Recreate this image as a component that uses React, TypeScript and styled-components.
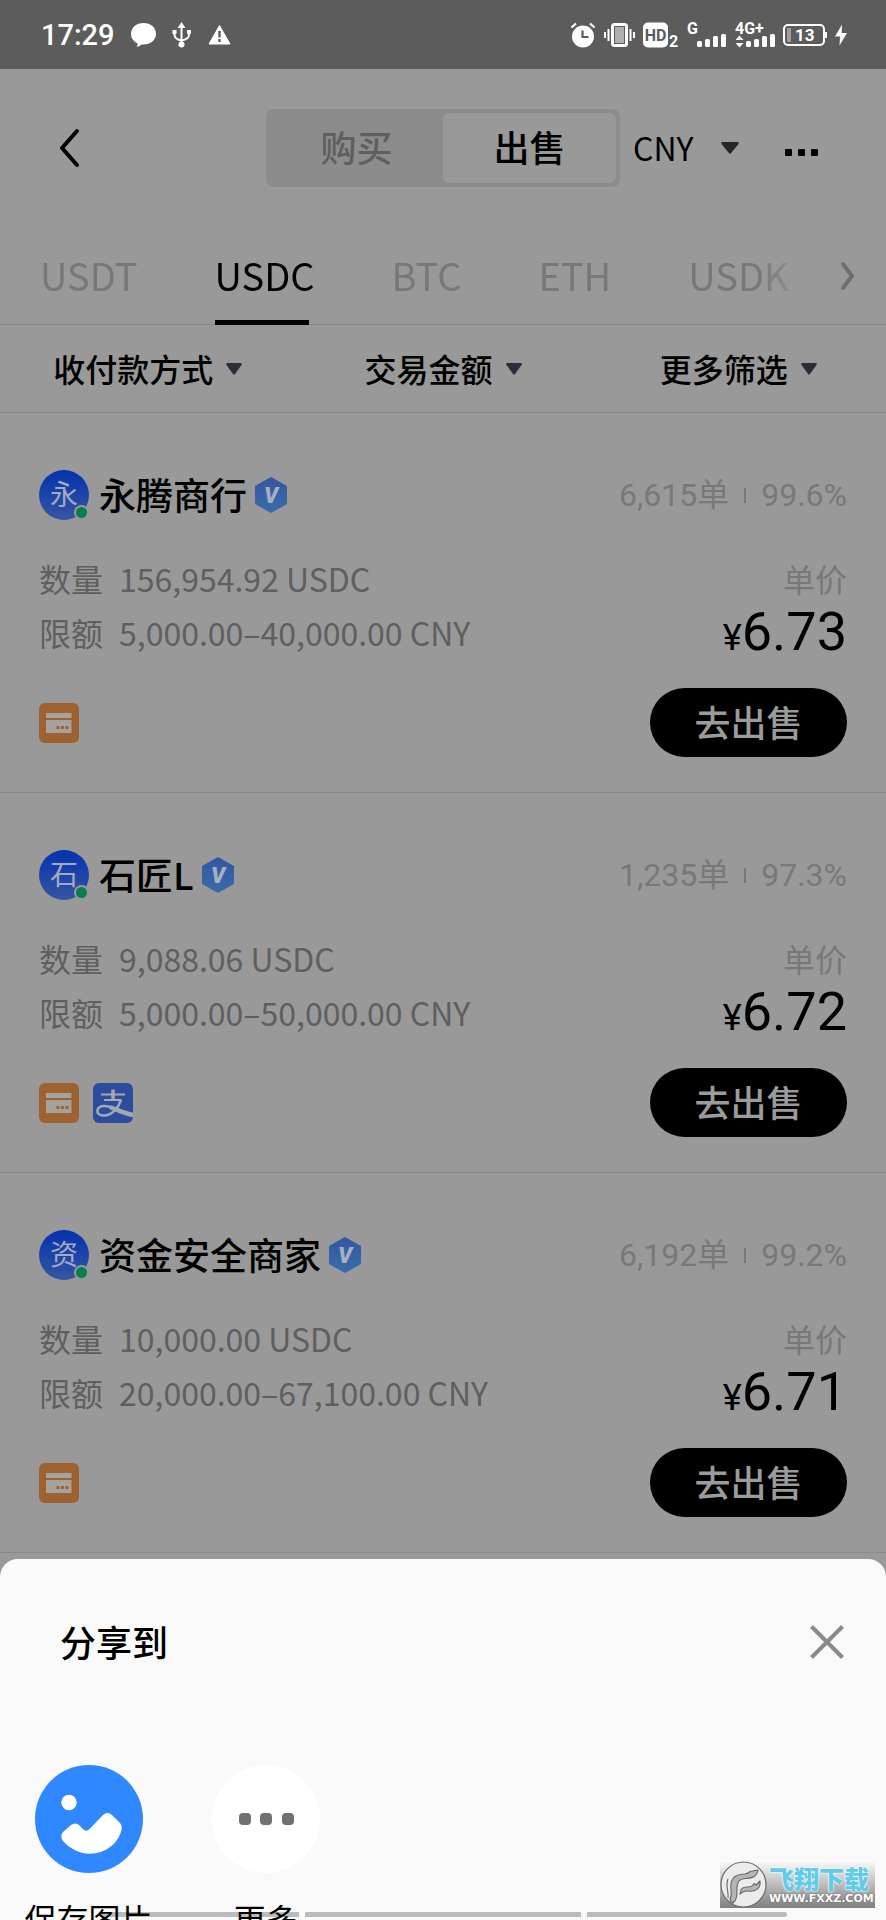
import React, { useState } from "react";
import styled, { createGlobalStyle } from "styled-components";

/* Colours of the page as it looks under the dimming of the open share sheet. */
const color = {
  status: "#5c5c5c",
  page: "#999999",
  line: "#8b8b8b",
  field: "#8c8c8c",
  ink: "#000000",
  soft: "#5f5f5f",
  faint: "#787878",
  caret: "#2b2e3a",
  sheet: "#fafafa",
};

const GlobalStyle = createGlobalStyle`
  * { box-sizing: border-box; }
  body {
    margin: 0;
    background: ${color.page};
    color: ${color.ink};
    font-family: "Noto Sans CJK SC", "Noto Sans", sans-serif;
    font-size: 32px;
  }
  button, select {
    margin: 0;
    padding: 0;
    border: 0;
    background: none;
    color: inherit;
    font: inherit;
    cursor: pointer;
  }
  svg { display: block; flex: none; overflow: visible; }
`;

const Screen = styled.div`
  height: 100vh;
  overflow: hidden;
`;

/* ---------- status bar ---------- */

const StatusBar = styled.div`
  display: flex;
  align-items: center;
  justify-content: space-between;
  height: 69px;
  padding: 0 39px 0 41px;
  background: ${color.status};
  color: #fff;
`;

const StatusGroup = styled.div<{ $gap: number }>`
  display: flex;
  align-items: center;
  gap: ${(p) => p.$gap}px;
`;

const Clock = styled.time`
  font: 500 29px/36px Roboto, sans-serif;
`;

const StatusText = styled.text`
  font-family: Roboto, sans-serif;
  font-weight: 700;
`;

const ChatIcon = () => (
  <svg width="25" height="26" viewBox="0 0 25 26" fill="#fff">
    <path d="M12.500 1C19.500 1 25 5.500 25 11.800S19.500 22.500 12.500 22.500Q11.500 22.500 10.500 22.400Q9 24 5.500 25Q7 23.300 6.400 21.300Q0 18.500 0 11.800C0 5.500 5.500 1 12.500 1Z" />
  </svg>
);

const UsbIcon = () => (
  <svg width="20" height="26" viewBox="0 0 20 26" fill="none" stroke="#fff" strokeWidth="2">
    <path d="M9.500 5V22M2.500 10V13Q2.500 17 9.500 18.500M17 10V13Q17 17 9.500 18.500" />
    <path d="M9.500 0L13.500 6H5.500Z M0.500 8H4.500V12H0.500Z M15 8H19V12H15Z" fill="#fff" stroke="none" />
    <circle cx="9.500" cy="22.500" r="3" fill="#fff" stroke="none" />
  </svg>
);

const WarnIcon = () => (
  <svg width="23" height="22" viewBox="0 0 23 22">
    <path d="M11.500 1.500L22 20H1Z" fill="#fff" stroke="#fff" strokeWidth="1" strokeLinejoin="round" />
    <path d="M11.500 7V13.500M11.500 15V18" stroke={color.status} strokeWidth="2.400" />
  </svg>
);

const AlarmIcon = () => (
  <svg width="26" height="26" viewBox="0 0 26 26">
    <circle cx="13" cy="14.500" r="11" fill="#fff" />
    <path d="M1.500 5.500L6 1.500M24.500 5.500L20 1.500" stroke="#fff" strokeWidth="2.200" fill="none" />
    <path d="M12.500 8.500V15H18.500" stroke={color.status} strokeWidth="2.200" fill="none" />
  </svg>
);

const VibrateIcon = () => (
  <svg width="31" height="26" viewBox="0 0 31 26">
    <rect x="8.500" y="2.500" width="14" height="21" rx="2" fill="#b0b0b0" stroke="#fff" strokeWidth="3" />
    <rect x="10.500" y="4.500" width="10" height="17" fill="none" stroke={color.status} strokeWidth="1" />
    <path d="M4.500 7V19M1 10V16M26.500 7V19M30 10V16" stroke="#fff" strokeWidth="2" />
  </svg>
);

const HdIcon = () => (
  <svg width="36" height="26" viewBox="0 0 36 26">
    <rect width="25" height="25" y="0.500" rx="5" fill="#fff" />
    <StatusText x="12.500" y="19" fontSize="16" textAnchor="middle" fill={color.status}>HD</StatusText>
    <StatusText x="26" y="25" fontSize="16" fill="#fff">2</StatusText>
  </svg>
);

const SignalIcon = ({ label, start, traffic }: { label: string; start: number; traffic?: boolean }) => (
  <svg width="40" height="26" viewBox="0 0 40 26" fill="#fff">
    <StatusText x="0" y="12" fontSize="16">{label}</StatusText>
    {traffic && <path d="M4.500 13.500L8.500 18H0.500ZM4.500 25.500L8.500 21H0.500Z" />}
    {[6, 8, 11, 13].map((h, i) => (
      <rect key={h} x={start + i * 8} y={25 - h} width="5" height={h} rx="1.500" />
    ))}
  </svg>
);

const BatteryIcon = () => (
  <svg width="44" height="26" viewBox="0 0 44 26">
    <rect x="1" y="3" width="40" height="20" rx="4" fill="none" stroke="#fff" strokeWidth="2" />
    <path d="M43 10V16" stroke="#fff" strokeWidth="2" />
    <rect x="4" y="6" width="4" height="14" fill="#9d9d9d" />
    <StatusText x="12" y="19" fontSize="17" fill="#fff">13</StatusText>
  </svg>
);

const BoltIcon = () => (
  <svg width="12" height="22" viewBox="0 0 12 22" fill="#fff">
    <path d="M7 0.500L0 12.500H5L4.500 21.500L12 9H6.700Z" />
  </svg>
);

/* ---------- header ---------- */

const Header = styled.header`
  display: grid;
  grid-template-columns: 1fr 354px 1fr;
  align-items: center;
  height: 158px;
`;

const BackButton = styled.button`
  justify-self: start;
  padding: 12px 12px 12px 60px;
`;

const Segments = styled.div`
  display: grid;
  grid-template-columns: 1fr 1fr;
  height: 78px;
  padding: 4px;
  border-radius: 8px;
  background: ${color.field};
`;

const Segment = styled.button<{ $active: boolean }>`
  padding-bottom: 4px;
  border-radius: 6px;
  background: ${(p) => (p.$active ? color.page : "transparent")};
  color: ${(p) => (p.$active ? color.ink : color.soft)};
  font-size: 36px;
  font-weight: 500;
  line-height: 48px;
`;

const HeaderEnd = styled.div`
  display: flex;
  align-items: center;
  justify-content: space-between;
  padding: 0 68px 0 13px;
`;

const Currency = styled.label`
  display: flex;
  align-items: center;
  gap: 20px;
`;

const CurrencySelect = styled.select`
  appearance: none;
  width: 68px;
  height: 48px;
  padding-bottom: 2px;
`;

const Caret = ({ width, fill }: { width: number; fill: string }) => (
  <svg width={width} height="12" viewBox="0 0 16 12" preserveAspectRatio="none" fill={fill}>
    <path d="M1 0H15Q16.500 0.500 15.500 2L9 11Q8 12.500 7 11L0.500 2Q-0.500 0.500 1 0Z" />
  </svg>
);

/* ---------- tabs and filters ---------- */

const TabBar = styled.div`
  display: flex;
  height: 98px;
  border-bottom: 1px solid ${color.line};
`;

const TabList = styled.div`
  display: flex;
  flex: 1;
  gap: 77px;
  height: 98px;
  padding-left: 40px;
  overflow: hidden;
  mask-image: linear-gradient(to left, transparent, #000 52px);
`;

const Tab = styled.button<{ $active: boolean }>`
  position: relative;
  flex: none;
  padding-bottom: 2px;
  color: ${(p) => (p.$active ? color.ink : color.faint)};
  font-size: 38px;
  line-height: 96px;

  &::after {
    content: "";
    position: absolute;
    left: 0;
    right: 6px;
    bottom: 0;
    height: 5px;
    background: ${(p) => (p.$active ? color.ink : "transparent")};
  }
`;

const TabsNext = styled.button`
  display: flex;
  align-items: center;
  justify-content: center;
  width: 76px;
`;

const Filters = styled.div`
  display: flex;
  height: 88px;
  border-bottom: 1px solid ${color.line};
`;

const Filter = styled.button`
  display: flex;
  flex: 1;
  align-items: center;
  justify-content: center;
  gap: 13px;
  font-weight: 500;
  line-height: 48px;
`;

const FilterLabel = styled.span`
  padding-bottom: 2px;
`;

/* ---------- offers ---------- */

const Offer = styled.article`
  padding: 57px 39px 35px;
  border-bottom: 1px solid ${color.line};
`;

const OfferHead = styled.div`
  display: flex;
  align-items: center;
  height: 50px;
`;

const Avatar = styled.span`
  position: relative;
  width: 50px;
  height: 50px;
  border-radius: 50%;
  background: linear-gradient(#0431b0, #3556a2);
  color: #a3aac0;
  font-size: 28px;
  line-height: 46px;
  text-align: center;

  &::after {
    content: "";
    position: absolute;
    right: 2px;
    bottom: 2px;
    width: 11px;
    height: 11px;
    border-radius: 50%;
    background: #04804f;
    box-shadow: 0 0 0 2px ${color.page};
  }
`;

const Merchant = styled.h2`
  margin: 0 8px 0 10px;
  padding-bottom: 2px;
  font-size: 37px;
  font-weight: 500;
  line-height: 48px;
`;

const Stats = styled.span`
  display: flex;
  align-items: center;
  gap: 15px;
  margin-left: auto;
  color: ${color.faint};
  font-family: Roboto, "Noto Sans CJK SC", sans-serif;
  line-height: 50px;
`;

const StatDivider = styled.i`
  width: 2px;
  height: 15px;
  background: ${color.faint};
`;

const OfferBody = styled.div`
  display: flex;
  justify-content: space-between;
  margin-top: 31px;
  line-height: 54px;
`;

const Facts = styled.dl`
  display: grid;
  grid-template-columns: auto 1fr;
  grid-auto-rows: 54px;
  column-gap: 16px;
  margin: 0;
  color: ${color.soft};
`;

const Fact = styled.dd`
  margin: 0;
`;

const PriceBox = styled.div`
  display: flex;
  flex-direction: column;
  align-items: flex-end;
`;

const PriceLabel = styled.span`
  color: ${color.faint};
`;

const Price = styled.strong`
  font: 400 54px/54px Roboto, sans-serif;
`;

const Yen = styled.span`
  font-size: 36px;
  line-height: 36px;
`;

const OfferFoot = styled.div`
  display: flex;
  align-items: center;
  gap: 14px;
  margin-top: 29px;
`;

const SellButton = styled.button`
  width: 197px;
  height: 69px;
  margin-left: auto;
  padding-bottom: 4px;
  border-radius: 35px;
  background: ${color.ink};
  color: #9b9b9b;
  font-size: 36px;
  font-weight: 500;
  line-height: 48px;
`;

const HexText = styled.text`
  font: italic 900 22px Roboto, sans-serif;
`;

const VerifiedIcon = ({ id }: { id: string }) => (
  <svg width="32" height="36" viewBox="0 0 32 36" role="img" aria-label="verified">
    <defs>
      <linearGradient id={id} x1="0" y1="0" x2="0" y2="1">
        <stop offset="0" stopColor="#3456a2" />
        <stop offset="1" stopColor="#386cab" />
      </linearGradient>
    </defs>
    <path d="M16 1L31 9.500V26.500L16 35L1 26.500V9.500Z" fill={`url(#${id})`} stroke={`url(#${id})`} strokeWidth="2" strokeLinejoin="round" />
    <HexText x="16" y="26" textAnchor="middle" fill="#a9b0bd">V</HexText>
  </svg>
);

const BankCardIcon = () => (
  <svg width="40" height="40" viewBox="0 0 40 40" role="img" aria-label="bank card">
    <rect width="40" height="40" rx="6" fill="#9d622f" />
    <path d="M7 10H32.500V15H7ZM7 17H32.500V30H7Z" fill="#a5a19d" />
    <path d="M17.500 24.500H29.500" stroke="#9d622f" strokeWidth="3" strokeDasharray="3 1.500" />
  </svg>
);

const AlipayIcon = () => (
  <svg width="40" height="40" viewBox="0 0 40 40" role="img" aria-label="alipay">
    <rect width="40" height="40" rx="6" fill="#2d4d9c" />
    <g fill="none" stroke="#a3a8b4">
      <path d="M8 11.500H32M11 17H28" strokeWidth="2" />
      <path d="M20 6.500V17" strokeWidth="3.500" />
      <path d="M28 16.500C26 24 19 32.500 11 32.500C6 32.500 3.800 30 4.500 27C6 22 13 22 20 25" strokeWidth="2.600" />
      <path d="M17 24C25 27 31 30.500 40 32" strokeWidth="4.500" />
    </g>
  </svg>
);

/* ---------- share sheet ---------- */

const Overlay = styled.div`
  position: fixed;
  inset: 0;
  display: flex;
  flex-direction: column;
  justify-content: flex-end;
  overflow: hidden;
`;

/* The sheet is taller than its opened part: the label row runs off the screen. */
const Sheet = styled.section`
  margin-bottom: -22px;
  border-radius: 18px 18px 0 0;
  background: ${color.sheet};
`;

const SheetHead = styled.div`
  display: flex;
  align-items: center;
  justify-content: space-between;
  height: 166px;
  padding: 0 42px 0 60px;
`;

const SheetTitle = styled.h1`
  margin: 0;
  padding-bottom: 2px;
  font-size: 36px;
  font-weight: 500;
  line-height: 48px;
`;

const Targets = styled.div`
  display: grid;
  grid-template-columns: repeat(5, 1fr);
  padding-top: 40px;
`;

const Target = styled.button`
  display: flex;
  flex-direction: column;
  align-items: center;
  gap: 21px;
  line-height: 48px;
`;

const GestureBar = styled.div`
  position: absolute;
  right: 99px;
  bottom: 3px;
  left: 99px;
  display: grid;
  grid-template-columns: 200px 1fr 200px;
  gap: 6px;
  height: 5px;
  border-radius: 3px;
  overflow: hidden;
`;

const GesturePart = styled.i`
  background: rgba(0, 0, 0, 0.25);
`;

const SavePictureIcon = () => (
  <svg width="108" height="108" viewBox="0 0 108 108">
    <circle cx="54" cy="54" r="54" fill="#2f88ff" />
    <circle cx="34" cy="37.500" r="7.700" fill="#fff" />
    <path
      fill="#fff"
      d="M28 67L36 60Q40 57 44 60L48.500 64.500Q51.500 67 54.500 64L68 50Q72.500 46 77 50L85 58Q87.500 61 86.500 65C83 79 70 88.700 55 88.700C44 88.700 34 83 28 76Q24.500 71 28 67Z"
    />
  </svg>
);

const MoreTargetsIcon = () => (
  <svg width="108" height="108" viewBox="0 0 108 108">
    <circle cx="54" cy="54" r="54" fill="#fff" />
    {[27, 48, 70].map((x) => (
      <rect key={x} x={x} y="48" width="12" height="12" rx="4" fill="#707070" />
    ))}
  </svg>
);

/* ---------- download site's stamp ---------- */

const Stamp = styled.div`
  position: absolute;
  right: 11px;
  bottom: 12px;
  display: flex;
  align-items: center;
  gap: 2px;
  width: 155px;
  height: 47px;
  background: linear-gradient(#fafafa, #bcbcbc 50%, #808080);
`;

const StampText = styled.div`
  display: flex;
  flex-direction: column;
`;

const StampName = styled.span`
  color: #62cbea;
  font-size: 25px;
  font-weight: 900;
  line-height: 28px;
  text-shadow: 0 0 2px #fff, 0 0 2px #fff;
  white-space: nowrap;
`;

const StampSite = styled.span`
  color: #fff;
  font: 700 11px/14px "DejaVu Sans", sans-serif;
  text-shadow: 0 0 2px #555;
`;

const StampLogo = () => (
  <svg width="47" height="47" viewBox="0 0 47 47">
    <circle cx="23.500" cy="23.500" r="22.500" fill="#ececec" stroke="#6a6a6a" strokeWidth="1.200" />
    <g fill="#b5b5b5" stroke="#666" strokeWidth="1.100" strokeLinejoin="round">
      <path d="M38 9C37 16 32 17 26 17.500C19 18 17 21 17 27C17 34 17 39 13 42C11 41 10 40 10 38C13 33 10 29 11 23C12 15 18 13 25 13C29 12.500 29 10 32 10Z" />
      <path d="M40 20C41 28 35 31 28 30C24 29.500 22 31 20 33C20 28 23 25.500 28 26C32 26 33 24.500 34 22.500L36 24Z" />
      <path d="M8 18C5 25 9 30 8 37" fill="none" />
    </g>
  </svg>
);

/* ---------- data ---------- */

const coins = ["USDT", "USDC", "BTC", "ETH", "USDK"];
const filters = ["收付款方式", "交易金额", "更多筛选"];

interface OfferData {
  name: string;
  orders: string;
  rate: string;
  amount: string;
  limit: string;
  price: string;
  alipay?: boolean;
}

const offers: OfferData[] = [
  { name: "永腾商行", orders: "6,615单", rate: "99.6%", amount: "156,954.92 USDC", limit: "5,000.00–40,000.00 CNY", price: "6.73" },
  { name: "石匠L", orders: "1,235单", rate: "97.3%", amount: "9,088.06 USDC", limit: "5,000.00–50,000.00 CNY", price: "6.72", alipay: true },
  { name: "资金安全商家", orders: "6,192单", rate: "99.2%", amount: "10,000.00 USDC", limit: "20,000.00–67,100.00 CNY", price: "6.71" },
];

export default function App() {
  const [side, setSide] = useState("出售");
  const [coin, setCoin] = useState("USDC");

  return (
    <Screen>
      <GlobalStyle />
      <StatusBar>
        <StatusGroup $gap={16}>
          <Clock>17:29</Clock>
          <ChatIcon />
          <UsbIcon />
          <WarnIcon />
        </StatusGroup>
        <StatusGroup $gap={8}>
          <AlarmIcon />
          <VibrateIcon />
          <HdIcon />
          <SignalIcon label="G" start={10} />
          <SignalIcon label="4G+" start={11} traffic />
          <BatteryIcon />
          <BoltIcon />
        </StatusGroup>
      </StatusBar>

      <Header>
        <BackButton aria-label="返回">
          <svg width="20" height="40" viewBox="0 0 20 40" fill="none" stroke="#000" strokeWidth="4" strokeLinecap="round" strokeLinejoin="round">
            <path d="M17 3L2 20L17 37" />
          </svg>
        </BackButton>
        <Segments>
          {["购买", "出售"].map((s) => (
            <Segment key={s} $active={s === side} onClick={() => setSide(s)}>
              {s}
            </Segment>
          ))}
        </Segments>
        <HeaderEnd>
          <Currency>
            <CurrencySelect aria-label="货币">
              <option>CNY</option>
            </CurrencySelect>
            <Caret width={18} fill="#262626" />
          </Currency>
          <button aria-label="更多">
            <svg width="33" height="16" viewBox="0 0 33 16" fill="#000">
              {[0, 13, 26].map((x) => (
                <rect key={x} x={x} y="9" width="7" height="7" rx="1" />
              ))}
            </svg>
          </button>
        </HeaderEnd>
      </Header>

      <TabBar>
        <TabList role="tablist">
          {coins.map((c) => (
            <Tab key={c} role="tab" aria-selected={c === coin} $active={c === coin} onClick={() => setCoin(c)}>
              {c}
            </Tab>
          ))}
        </TabList>
        <TabsNext aria-label="下一页">
          <svg width="14" height="28" viewBox="0 0 14 28" fill="none" stroke="#6e6e6e" strokeWidth="4" strokeLinecap="round">
            <path d="M2 2L11 14L2 26" />
          </svg>
        </TabsNext>
      </TabBar>

      <Filters>
        {filters.map((f) => (
          <Filter key={f}>
            <FilterLabel>{f}</FilterLabel>
            <Caret width={16} fill={color.caret} />
          </Filter>
        ))}
      </Filters>

      <main>
        {offers.map((o, i) => (
          <Offer key={o.name}>
            <OfferHead>
              <Avatar>{o.name[0]}</Avatar>
              <Merchant>{o.name}</Merchant>
              <VerifiedIcon id={`hex-${i}`} />
              <Stats>
                {o.orders}
                <StatDivider />
                {o.rate}
              </Stats>
            </OfferHead>
            <OfferBody>
              <Facts>
                <dt>数量</dt>
                <Fact>{o.amount}</Fact>
                <dt>限额</dt>
                <Fact>{o.limit}</Fact>
              </Facts>
              <PriceBox>
                <PriceLabel>单价</PriceLabel>
                <Price>
                  <Yen>¥</Yen>
                  {o.price}
                </Price>
              </PriceBox>
            </OfferBody>
            <OfferFoot>
              <BankCardIcon />
              {o.alipay && <AlipayIcon />}
              <SellButton>去出售</SellButton>
            </OfferFoot>
          </Offer>
        ))}
      </main>

      <Overlay>
        <Sheet role="dialog" aria-labelledby="share-title">
          <SheetHead>
            <SheetTitle id="share-title">分享到</SheetTitle>
            <button aria-label="关闭">
              <svg width="34" height="34" viewBox="0 0 34 34" stroke="#8a8a8a" strokeWidth="4">
                <path d="M1.500 1.500L32.500 32.500M32.500 1.500L1.500 32.500" />
              </svg>
            </button>
          </SheetHead>
          <Targets>
            <Target>
              <SavePictureIcon />
              保存图片
            </Target>
            <Target>
              <MoreTargetsIcon />
              更多
            </Target>
          </Targets>
        </Sheet>
        <GestureBar>
          <GesturePart />
          <GesturePart />
          <GesturePart />
        </GestureBar>
        <Stamp>
          <StampLogo />
          <StampText>
            <StampName>飞翔下载</StampName>
            <StampSite>WWW.FXXZ.COM</StampSite>
          </StampText>
        </Stamp>
      </Overlay>
    </Screen>
  );
}
